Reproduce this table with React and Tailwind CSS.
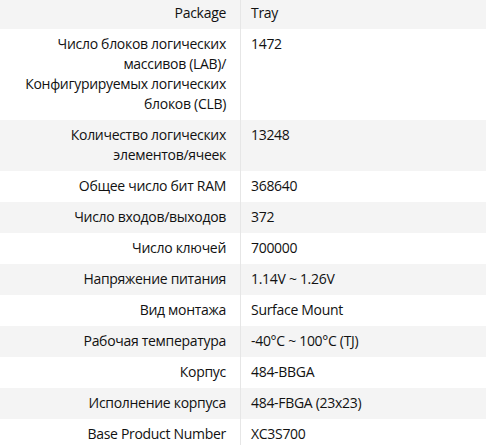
const rows = [
  { label: "Package", value: "Tray" },
  {
    label: [
      "Число блоков логических",
      "массивов (LAB)/",
      "Конфигурируемых логических",
      "блоков (CLB)",
    ],
    value: "1472",
  },
  { label: ["Количество логических", "элементов/ячеек"], value: "13248" },
  { label: "Общее число бит RAM", value: "368640" },
  { label: "Число входов/выходов", value: "372" },
  { label: "Число ключей", value: "700000" },
  { label: "Напряжение питания", value: "1.14V ~ 1.26V" },
  { label: "Вид монтажа", value: "Surface Mount" },
  { label: "Рабочая температура", value: "-40°C ~ 100°C (TJ)" },
  { label: "Корпус", value: "484-BBGA" },
  { label: "Исполнение корпуса", value: "484-FBGA (23x23)" },
  { label: "Base Product Number", value: "XC3S700" },
];

export default function App() {
  return (
    <div className="w-[486px] h-[445px] overflow-hidden bg-white">
      <div className="-mt-[2px] font-['Open_Sans',sans-serif] text-[14px] leading-[20px] tracking-[-0.3px] text-[#111] font-medium">
        {rows.map((row, i) => {
          const lines = Array.isArray(row.label) ? row.label : [row.label];
          return (
            <div
              key={i}
              className={`flex ${i % 2 === 0 ? "bg-[#f4f4f4]" : "bg-white"}`}
            >
              <div className="w-[241px] shrink-0 border-r border-[#e6e6e6] pt-[5px] pb-[6px] pr-[14px] text-right">
                {lines.map((l, j) => (
                  <div key={j} className="whitespace-nowrap">
                    {l}
                  </div>
                ))}
              </div>
              <div className="flex-1 pt-[5px] pb-[6px] pl-[10px]">
                {row.value}
              </div>
            </div>
          );
        })}
      </div>
    </div>
  );
}
